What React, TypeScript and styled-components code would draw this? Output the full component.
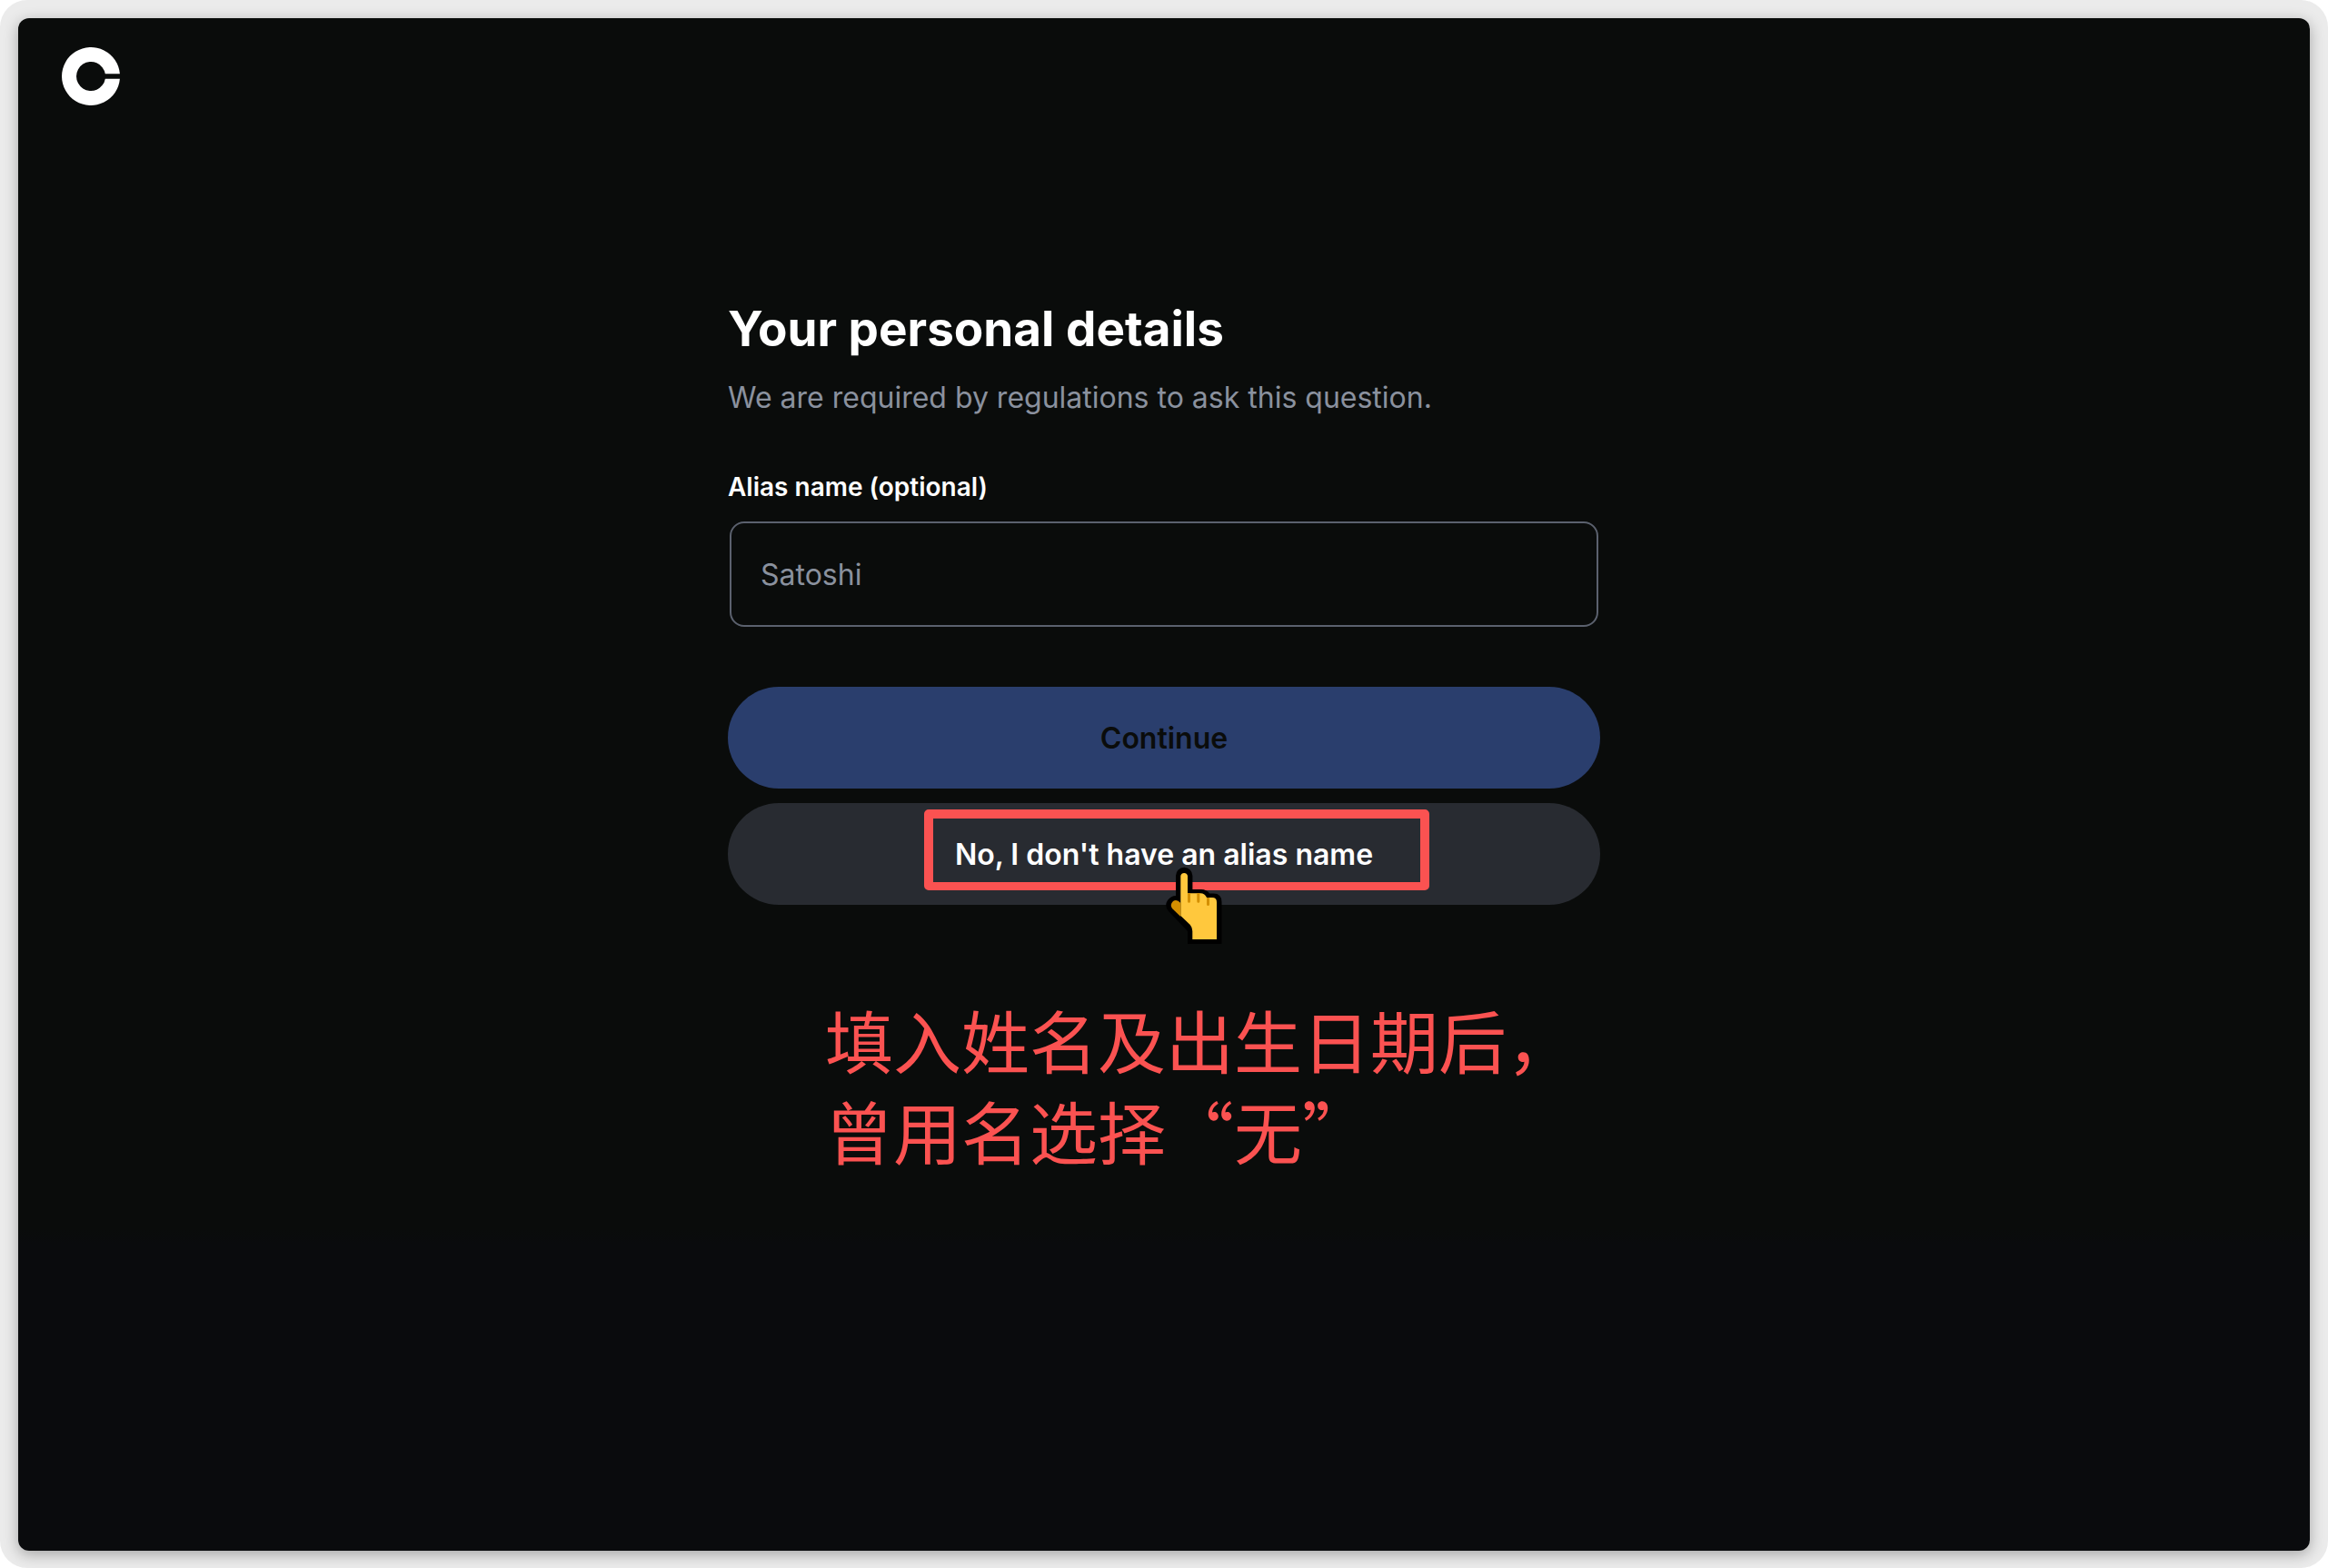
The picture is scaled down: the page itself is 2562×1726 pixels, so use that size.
import React, { useState } from "react";
import styled, { createGlobalStyle } from "styled-components";

const colors = {
  canvas: "#0a0c0b",
  canvasEnd: "#0a0b0d",
  frame: "#ebebeb",
  text: "#ffffff",
  muted: "#8a919e",
  border: "#5b616e",
  primary: "#2a3e6d",
  secondary: "#282b31",
  callout: "#fb5251",
};

const GlobalStyle = createGlobalStyle`
  *, *::before, *::after { box-sizing: border-box; }
  body {
    margin: 0;
    background: #ffffff;
    font-family: Inter, "Noto Sans CJK SC", sans-serif;
  }
`;

const Frame = styled.div`
  display: flex;
  min-height: 100vh;
  padding: 20px 20px 19px;
  border-radius: 30px;
  background: ${colors.frame};
`;

const Window = styled.div`
  flex: 1;
  display: flex;
  flex-direction: column;
  border-radius: 12px;
  background: linear-gradient(${colors.canvas} 79%, ${colors.canvasEnd} 80%);
  box-shadow: 0 4px 16px rgba(0, 0, 0, 0.3);
`;

const Header = styled.header`
  display: flex;
  padding: 32px 48px;
`;

const LogoLink = styled.a`
  display: block;
  width: 64px;
  height: 64px;

  svg {
    display: block;
  }
`;

const Content = styled.main`
  width: 100%;
  max-width: 960px;
  margin: 0 auto;
  padding: 178px 0 64px;
`;

const Title = styled.h1`
  margin: 0 0 16px;
  color: ${colors.text};
  font-size: 53px;
  font-weight: 700;
  line-height: 72px;
`;

const Subtitle = styled.p`
  margin: 0 0 54px;
  color: ${colors.muted};
  font-size: 32px;
  line-height: 48px;
`;

const Form = styled.form`
  display: flex;
  flex-direction: column;
`;

const Label = styled.label`
  margin-bottom: 18px;
  color: ${colors.text};
  font-size: 28px;
  font-weight: 600;
  line-height: 40px;
`;

const TextInput = styled.input`
  height: 116px;
  margin: 0 2px;
  padding: 0 32px;
  border: 2px solid ${colors.border};
  border-radius: 16px;
  outline: none;
  background: transparent;
  color: ${colors.text};
  font: inherit;
  font-size: 32px;

  &::placeholder {
    color: ${colors.muted};
    opacity: 1;
  }
`;

const Actions = styled.div`
  display: flex;
  flex-direction: column;
  gap: 16px;
  margin-top: 66px;
`;

const Button = styled.button<{ $variant: "primary" | "secondary" }>`
  width: 100%;
  height: 112px;
  padding: 0 32px;
  border: 0;
  border-radius: 56px;
  background: ${({ $variant }) => colors[$variant]};
  color: ${({ $variant }) => ($variant === "primary" ? colors.canvas : colors.text)};
  font: inherit;
  font-size: 32px;
  font-weight: 600;
`;

const Highlighted = styled.div`
  position: relative;
`;

const HighlightBox = styled.span`
  position: absolute;
  top: 7px;
  left: 216px;
  width: 556px;
  height: 89px;
  border: 10px solid ${colors.callout};
  border-bottom-width: 9px;
  border-radius: 5px;
  pointer-events: none;
`;

const Pointer = styled.svg`
  position: absolute;
  top: 70px;
  left: 480px;
  width: 66px;
  height: 86px;
  pointer-events: none;
`;

const Note = styled.p`
  margin: 98px 0 0 107px;
  color: ${colors.callout};
  font-family: "Noto Sans CJK SC", sans-serif;
  font-size: 75px;
  font-weight: 400;
  line-height: 100px;
`;

function Logo() {
  return (
    <svg width="64" height="64" viewBox="0 0 64 64" aria-hidden="true">
      <path
        fill="#ffffff"
        d="M63.9 29.3A32 32 0 1 0 63.9 34.7H47.8A16 16 0 1 1 47.8 29.3Z"
      />
    </svg>
  );
}

function PointingHand() {
  return (
    <Pointer viewBox="0 0 66 86" aria-hidden="true">
      <path
        d="M13 32V10a9.2 9.2 0 0 1 18.4 0v15H41q6 0 9 4.5h4.500q9 0 9 9.500v46H26V71L5 49q-5-6-1-12q4-5 9-5Z"
        fill="#000000"
      />
      <path
        d="M18.300 38V10a4 4 0 0 1 7.700 0v19.300H40q5 0 7 4.700h6q5 0 5 5v41H31.300V71q0-4-2.500-7L18.300 54Z"
        fill="#ffc83d"
      />
      <path d="M18.300 40Q14 35 10 38q-4 4-1 8l9.300 9Z" fill="#d38f00" />
      <path
        d="M26 29.300h3v9a1.500 1.500 0 0 1-3 0ZM36.300 29.300h3v9a1.500 1.500 0 0 1-3 0ZM47 34h3v7.500a1.500 1.500 0 0 1-3 0Z"
        fill="#d38f00"
      />
    </Pointer>
  );
}

export default function App() {
  const [alias, setAlias] = useState("");

  return (
    <>
      <GlobalStyle />
      <Frame>
        <Window>
          <Header>
            <LogoLink href="#" aria-label="Coinbase">
              <Logo />
            </LogoLink>
          </Header>
          <Content>
            <Title>Your personal details</Title>
            <Subtitle>We are required by regulations to ask this question.</Subtitle>
            <Form onSubmit={(event) => event.preventDefault()}>
              <Label htmlFor="alias">Alias name (optional)</Label>
              <TextInput
                id="alias"
                type="text"
                placeholder="Satoshi"
                value={alias}
                onChange={(event) => setAlias(event.target.value)}
              />
              <Actions>
                <Button $variant="primary" type="submit">
                  Continue
                </Button>
                <Highlighted>
                  <Button $variant="secondary" type="button">
                    No, I don't have an alias name
                  </Button>
                  <HighlightBox />
                  <PointingHand />
                </Highlighted>
              </Actions>
            </Form>
            <Note lang="zh-CN">
              填入姓名及出生日期后，
              <br />
              曾用名选择“无”
            </Note>
          </Content>
        </Window>
      </Frame>
    </>
  );
}
